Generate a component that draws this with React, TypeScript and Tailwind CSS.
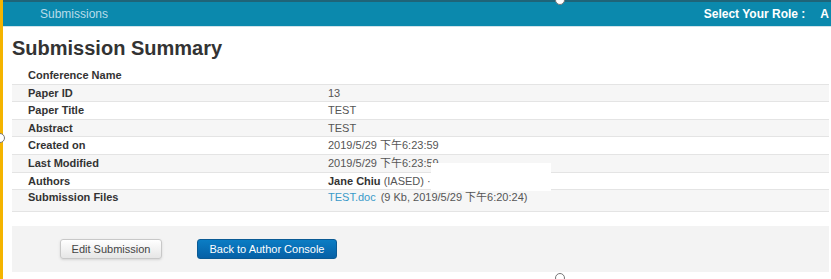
import React from "react";

const rows: { label: string; value: React.ReactNode }[] = [
  { label: "Conference Name", value: "" },
  { label: "Paper ID", value: "13" },
  { label: "Paper Title", value: "TEST" },
  { label: "Abstract", value: "TEST" },
  { label: "Created on", value: "2019/5/29 下午6:23:59" },
  { label: "Last Modified", value: "2019/5/29 下午6:23:59" },
  {
    label: "Authors",
    value: (
      <>
        <span className="font-bold text-[#333]">Jane Chiu</span> (IASED) ·
      </>
    ),
  },
  {
    label: "Submission Files",
    value: (
      <>
        <span className="text-[#3a9ac9]">TEST.doc</span>
        <span className="ml-[5px]">(9 Kb, 2019/5/29 下午6:20:24)</span>
      </>
    ),
  },
];

function Handle({ className }: { className: string }) {
  return (
    <div
      className={`absolute h-[10px] w-[10px] rounded-full border border-[#777] bg-white ${className}`}
    />
  );
}

export default function App() {
  return (
    <div
      className="relative h-[279px] w-[831px] overflow-hidden bg-white"
      style={{ fontFamily: '"Liberation Sans", "Noto Sans CJK TC", Arial, sans-serif' }}
    >
      <div className="flex h-full border-l-[3px] border-[#f4b400]">
        <div className="flex flex-1 flex-col">
          {/* top bar */}
          <div className="flex h-[27px] items-center border-t-2 border-b border-t-[#1f6478] border-b-[#cfe3ea] bg-[#0b89ad] pl-[37px] pr-[2px]">
            <span className="text-[12px] text-[#b9dcea]">Submissions</span>
            <span className="ml-auto text-[12px] font-bold text-white">Select Your Role :</span>
            <span className="ml-[15px] text-[12px] font-bold text-white">A</span>
          </div>

          <div className="pl-[9px] pr-[2px]">
            <h1 className="mt-[9px] text-[20px] leading-[24px] font-bold text-[#333]">Submission Summary</h1>

            {/* summary table */}
            <div className="mt-[7px] text-[11px]">
              {rows.map((r, i) => {
                const last = i === rows.length - 1;
                return (
                  <div
                    key={r.label}
                    className={`flex border-b border-[#e4e4e4] ${
                      last ? "h-[22px] items-start pt-[1px] leading-[13px]" : "h-[17.6px] items-center"
                    } ${i % 2 === 1 ? "bg-[#f6f6f6]" : "bg-white"}`}
                  >
                    <span className="w-[316px] shrink-0 pl-[16px] font-bold text-[#333]">{r.label}</span>
                    <span className="text-[#555]">{r.value}</span>
                  </div>
                );
              })}
            </div>

            {/* actions */}
            <div className="mt-[14px] flex h-[46px] items-center gap-[35px] bg-[#f3f3f3] pl-[48px]">
              <button className="h-[20px] w-[102px] rounded-[3px] border border-[#c8c8c8] bg-gradient-to-b from-white to-[#e6e6e6] text-[11px] text-[#444] shadow-sm">
                Edit Submission
              </button>
              <button className="h-[20px] w-[140px] rounded-[3px] border border-[#0a5a94] bg-gradient-to-b from-[#0b7dc4] to-[#0660a6] text-[11px] text-white">
                Back to Author Console
              </button>
            </div>
          </div>
        </div>
      </div>

      {/* redaction box */}
      <div className="absolute left-[431px] top-[163px] h-[28px] w-[120px] bg-white" />

      {/* selection handles */}
      <Handle className="-left-[5px] top-[133px]" />
      <Handle className="left-[555px] -top-[5px]" />
      <Handle className="left-[555px] top-[273px]" />
    </div>
  );
}
